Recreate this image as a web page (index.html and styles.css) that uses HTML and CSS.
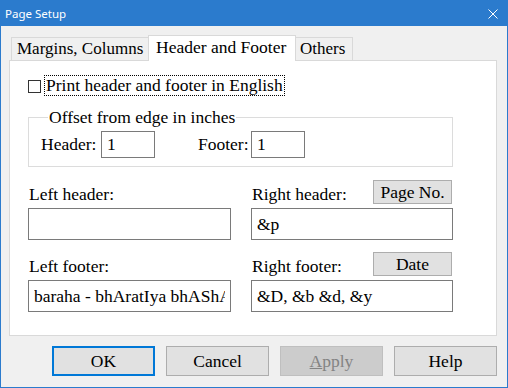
FILE: index.html
```html
<!DOCTYPE html>
<html lang="en">

<head>
  <meta charset="UTF-8">
  <meta name="viewport" content="width=device-width, initial-scale=1.0">
  <title>Page Setup</title>
  <link rel="stylesheet" href="styles.css">
</head>

<body>
  <div class="window">
    <div class="titlebar">
      <span class="title">Page Setup</span>
      <svg class="close" width="10" height="10" viewBox="0 0 10 10">
        <path d="M0.5 0.5 L9.5 9.5 M9.5 0.5 L0.5 9.5" stroke="#fff" stroke-width="1" fill="none" />
      </svg>
    </div>

    <div class="client">
      <div class="tabs">
        <div class="tab tab-first">Margins, Columns</div>
        <div class="tab active">Header and Footer</div>
        <div class="tab tab-last">Others</div>
      </div>

      <div class="panel">
        <label class="check-row">
          <span class="checkbox"></span>
          <span class="focus">Print header and footer in English</span>
        </label>

        <fieldset class="offset">
          <legend>Offset from edge in inches</legend>
          <div class="offset-row">
            <label class="offset-label" for="hdr">Header:</label>
            <input type="text" id="hdr" class="small-input" value="1">
            <label class="offset-label footer-label" for="ftr">Footer:</label>
            <input type="text" id="ftr" class="small-input" value="1">
          </div>
        </fieldset>

        <div class="fields">
          <div class="field">
            <div class="field-head">
              <label for="lh">Left header:</label>
            </div>
            <input type="text" id="lh" class="text-input" value="">
          </div>
          <div class="field">
            <div class="field-head">
              <label for="rh">Right header:</label>
              <button class="small-btn">Page No.</button>
            </div>
            <input type="text" id="rh" class="text-input" value="&amp;p">
          </div>
          <div class="field">
            <div class="field-head">
              <label for="lf">Left footer:</label>
            </div>
            <input type="text" id="lf" class="text-input" value="baraha - bhAratIya bhAShA">
          </div>
          <div class="field">
            <div class="field-head">
              <label for="rf">Right footer:</label>
              <button class="small-btn">Date</button>
            </div>
            <input type="text" id="rf" class="text-input" value="&amp;D, &amp;b &amp;d, &amp;y">
          </div>
        </div>
      </div>

      <div class="actions">
        <button class="btn default">OK</button>
        <button class="btn">Cancel</button>
        <button class="btn" disabled><u>A</u>pply</button>
        <button class="btn">Help</button>
      </div>
    </div>
  </div>
</body>

</html>
```

FILE: styles.css
```css
body {
  margin: 0;
  font-family: "Liberation Serif", serif;
  font-size: 17.5px;
  color: #000;
}

.window {
  width: 508px;
  height: 388px;
  box-sizing: border-box;
  border: 1px solid #2b7bcd;
  border-top: none;
  background: #f0f0f0;
  display: flex;
  flex-direction: column;
}

.titlebar {
  height: 26px;
  margin: 0 -1px;
  background: #2b7bcd;
  display: flex;
  align-items: center;
  justify-content: space-between;
  padding: 0 10px 0 5px;
  color: #fff;
}

.title {
  font-family: "Noto Sans", sans-serif;
  font-size: 11.5px;
}

.close {
  display: block;
  margin-top: 1px;
}

.client {
  flex: 1;
  display: flex;
  flex-direction: column;
}

/* tab strip */
.tabs {
  display: flex;
  align-items: flex-end;
  margin: 9px 0 -1px 10px;
  height: 26px;
  position: relative;
  z-index: 1;
}

.tab {
  height: 23px;
  box-sizing: border-box;
  margin-bottom: 1px;
  padding: 1px 0 0 5px;
  border: 1px solid #d9d9d9;
  border-bottom: none;
  background: #f0f0f0;
  font-size: 17px;
  line-height: 20px;
  white-space: nowrap;
  overflow: hidden;
}

.tab-first {
  width: 137px;
  border-right: none;
}

.tab-last {
  width: 57px;
  border-left: none;
  padding-left: 4px;
}

.tab.active {
  width: 148px;
  height: 26px;
  margin-bottom: 0;
  padding-left: 7px;
  background: #fff;
  font-size: 17.5px;
}

.panel {
  height: 276px;
  box-sizing: border-box;
  margin: 0 10px 0 8px;
  border: 1px solid #d9d9d9;
  background: #fff;
  padding: 15px 0 0 18px;
}

.check-row {
  display: flex;
  align-items: center;
  height: 19px;
}

.checkbox {
  width: 13px;
  height: 13px;
  box-sizing: border-box;
  border: 1px solid #333;
  margin: 1px 4px 0 0;
}

.focus {
  outline: 1px dotted #000;
  padding: 0 1px;
  line-height: 19px;
}

.offset {
  width: 425px;
  box-sizing: border-box;
  margin: 12px 0 0;
  padding: 4px 0 8px 12px;
  border: 1px solid #dcdcdc;
  min-width: 0;
}

.offset legend {
  padding: 0 1px;
  margin-left: 7px;
  line-height: 20px;
}

.offset-row {
  display: flex;
  align-items: center;
}

.offset-label {
  width: 60px;
}

.footer-label {
  width: 53px;
  margin-left: 43px;
}

.small-input,
.text-input {
  box-sizing: border-box;
  border: 1px solid #7a7a7a;
  font-family: "Liberation Serif", serif;
  font-size: 17.5px;
  padding: 0 5px;
  margin: 0;
  color: #000;
  background: #fff;
  outline: none;
}

.small-input {
  width: 54px;
  height: 27px;
}

.fields {
  display: grid;
  grid-template-columns: 203px 202px;
  column-gap: 20px;
  row-gap: 12px;
  margin-top: 13px;
}

.field-head {
  display: flex;
  justify-content: space-between;
  align-items: flex-end;
  height: 24px;
  margin-bottom: 4px;
}

.field-head label {
  padding-left: 1px;
  line-height: 20px;
}

.small-btn {
  width: 79px;
  height: 24px;
  margin-right: 1px;
  border: 1px solid #adadad;
  background: #e1e1e1;
  font-family: "Liberation Serif", serif;
  font-size: 17.5px;
  line-height: 20px;
  padding: 0;
  color: #000;
}

.text-input {
  width: 100%;
  height: 32px;
}

/* dialog buttons */
.actions {
  display: flex;
  justify-content: flex-end;
  gap: 11px;
  margin: 10px 10px 0 0;
}

.btn {
  width: 103px;
  height: 30px;
  border: 1px solid #adadad;
  background: #e1e1e1;
  font-family: "Liberation Serif", serif;
  font-size: 17.5px;
  color: #000;
  padding: 0;
}

.btn.default {
  border: 2px solid #0078d7;
}

.btn:disabled {
  background: #cccccc;
  border-color: #bfbfbf;
  color: #838383;
}
```
